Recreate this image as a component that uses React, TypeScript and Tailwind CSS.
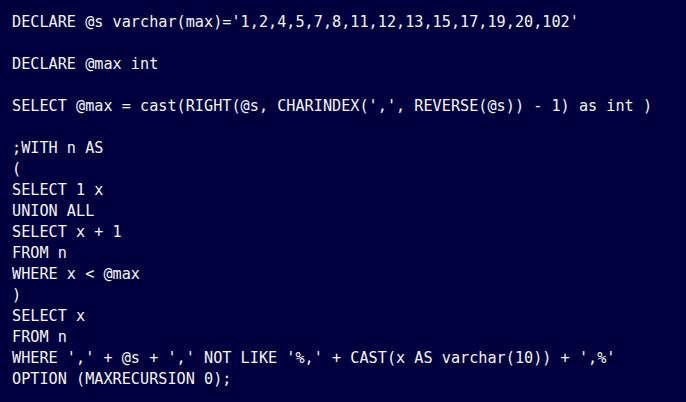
const code = `DECLARE @s varchar(max)='1,2,4,5,7,8,11,12,13,15,17,19,20,102'

DECLARE @max int

SELECT @max = cast(RIGHT(@s, CHARINDEX(',', REVERSE(@s)) - 1) as int )

;WITH n AS
(
SELECT 1 x
UNION ALL
SELECT x + 1
FROM n
WHERE x < @max
)
SELECT x
FROM n
WHERE ',' + @s + ',' NOT LIKE '%,' + CAST(x AS varchar(10)) + ',%'
OPTION (MAXRECURSION 0);`

export default function App() {
  return (
    <div className="min-h-screen w-full bg-[#01003f]">
      <pre className="m-0 px-[12px] pt-[12px] pb-[12px] font-['DejaVu_Sans_Mono',monospace] text-[15.2px] leading-[21px] text-[#f4f4f4] whitespace-pre">
        {code}
      </pre>
    </div>
  )
}
